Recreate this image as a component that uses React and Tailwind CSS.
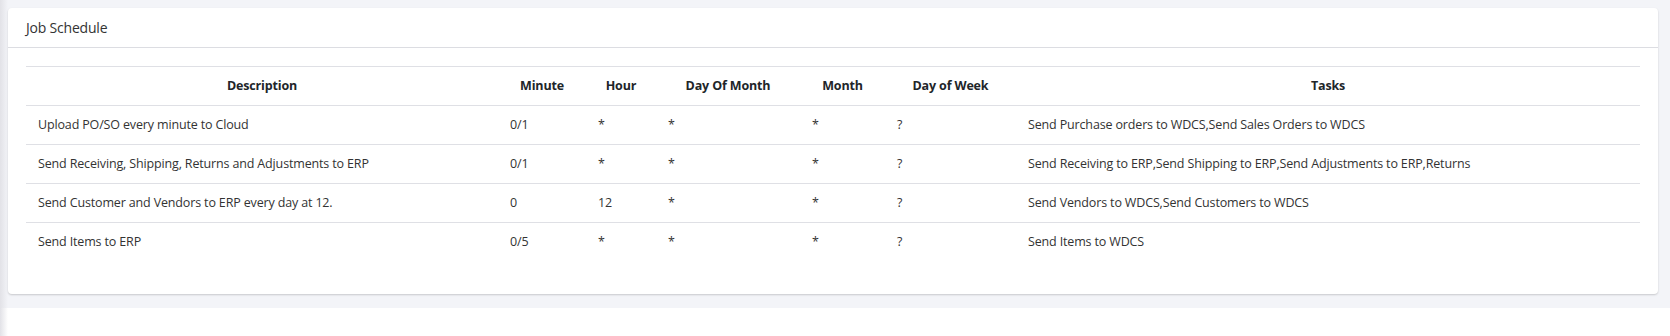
const jobs = [
  {
    description: 'Upload PO/SO every minute to Cloud',
    minute: '0/1',
    hour: '*',
    dayOfMonth: '*',
    month: '*',
    dayOfWeek: '?',
    tasks: 'Send Purchase orders to WDCS,Send Sales Orders to WDCS',
  },
  {
    description: 'Send Receiving, Shipping, Returns and Adjustments to ERP',
    minute: '0/1',
    hour: '*',
    dayOfMonth: '*',
    month: '*',
    dayOfWeek: '?',
    tasks: 'Send Receiving to ERP,Send Shipping to ERP,Send Adjustments to ERP,Returns',
  },
  {
    description: 'Send Customer and Vendors to ERP every day at 12.',
    minute: '0',
    hour: '12',
    dayOfMonth: '*',
    month: '*',
    dayOfWeek: '?',
    tasks: 'Send Vendors to WDCS,Send Customers to WDCS',
  },
  {
    description: 'Send Items to ERP',
    minute: '0/5',
    hour: '*',
    dayOfMonth: '*',
    month: '*',
    dayOfWeek: '?',
    tasks: 'Send Items to WDCS',
  },
]

function App() {
  return (
    <div className="relative min-h-[336px] bg-white font-['Segoe_UI','Open_Sans',sans-serif] text-[12.5px] tracking-[-0.15px] text-[#333]">
      {/* sidebar shadow on the left edge */}
      <div className="absolute inset-y-0 left-0 w-2 bg-gradient-to-r from-[#e2e2e7] to-transparent" />

      <div className="bg-[#f3f4f8] pt-2 pl-2 pr-3 pb-[14px]">
        <div className="bg-white rounded-[4px] shadow-[0_1px_2px_rgba(0,0,0,0.18)]">
          <div className="h-10 flex items-center px-[18px] border-b border-[#dcdde2] text-[14px] tracking-[-0.2px] text-[#333]">
            Job Schedule
          </div>

          <div className="px-[18px] pt-[18px] pb-8">
            <table className="w-full table-fixed border-collapse">
              <colgroup>
                <col className="w-[472px]" />
                <col className="w-[88px]" />
                <col className="w-[70px]" />
                <col className="w-[144px]" />
                <col className="w-[85px]" />
                <col className="w-[131px]" />
                <col />
              </colgroup>
              <thead>
                <tr className="h-[39px] border-t border-b border-[#dfe0e5]">
                  <th className="px-3 text-center font-bold text-[#212529]">Description</th>
                  <th className="px-3 text-center font-bold text-[#212529]">Minute</th>
                  <th className="px-3 text-center font-bold text-[#212529]">Hour</th>
                  <th className="px-3 text-center font-bold text-[#212529]">Day Of Month</th>
                  <th className="px-3 text-center font-bold text-[#212529]">Month</th>
                  <th className="px-3 text-center font-bold text-[#212529]">Day of Week</th>
                  <th className="px-3 text-center font-bold text-[#212529]">Tasks</th>
                </tr>
              </thead>
              <tbody>
                {jobs.map((job, idx) => (
                  <tr
                    key={idx}
                    className={`h-[39px] ${idx < jobs.length - 1 ? 'border-b border-[#dfe0e5]' : ''}`}
                  >
                    <td className="px-3 whitespace-nowrap">{job.description}</td>
                    <td className="px-3">{job.minute}</td>
                    <td className="px-3">{job.hour}</td>
                    <td className="px-3">{job.dayOfMonth}</td>
                    <td className="px-3">{job.month}</td>
                    <td className="px-3">{job.dayOfWeek}</td>
                    <td className="px-3 whitespace-nowrap">{job.tasks}</td>
                  </tr>
                ))}
              </tbody>
            </table>
          </div>
        </div>
      </div>
    </div>
  )
}

export default App
